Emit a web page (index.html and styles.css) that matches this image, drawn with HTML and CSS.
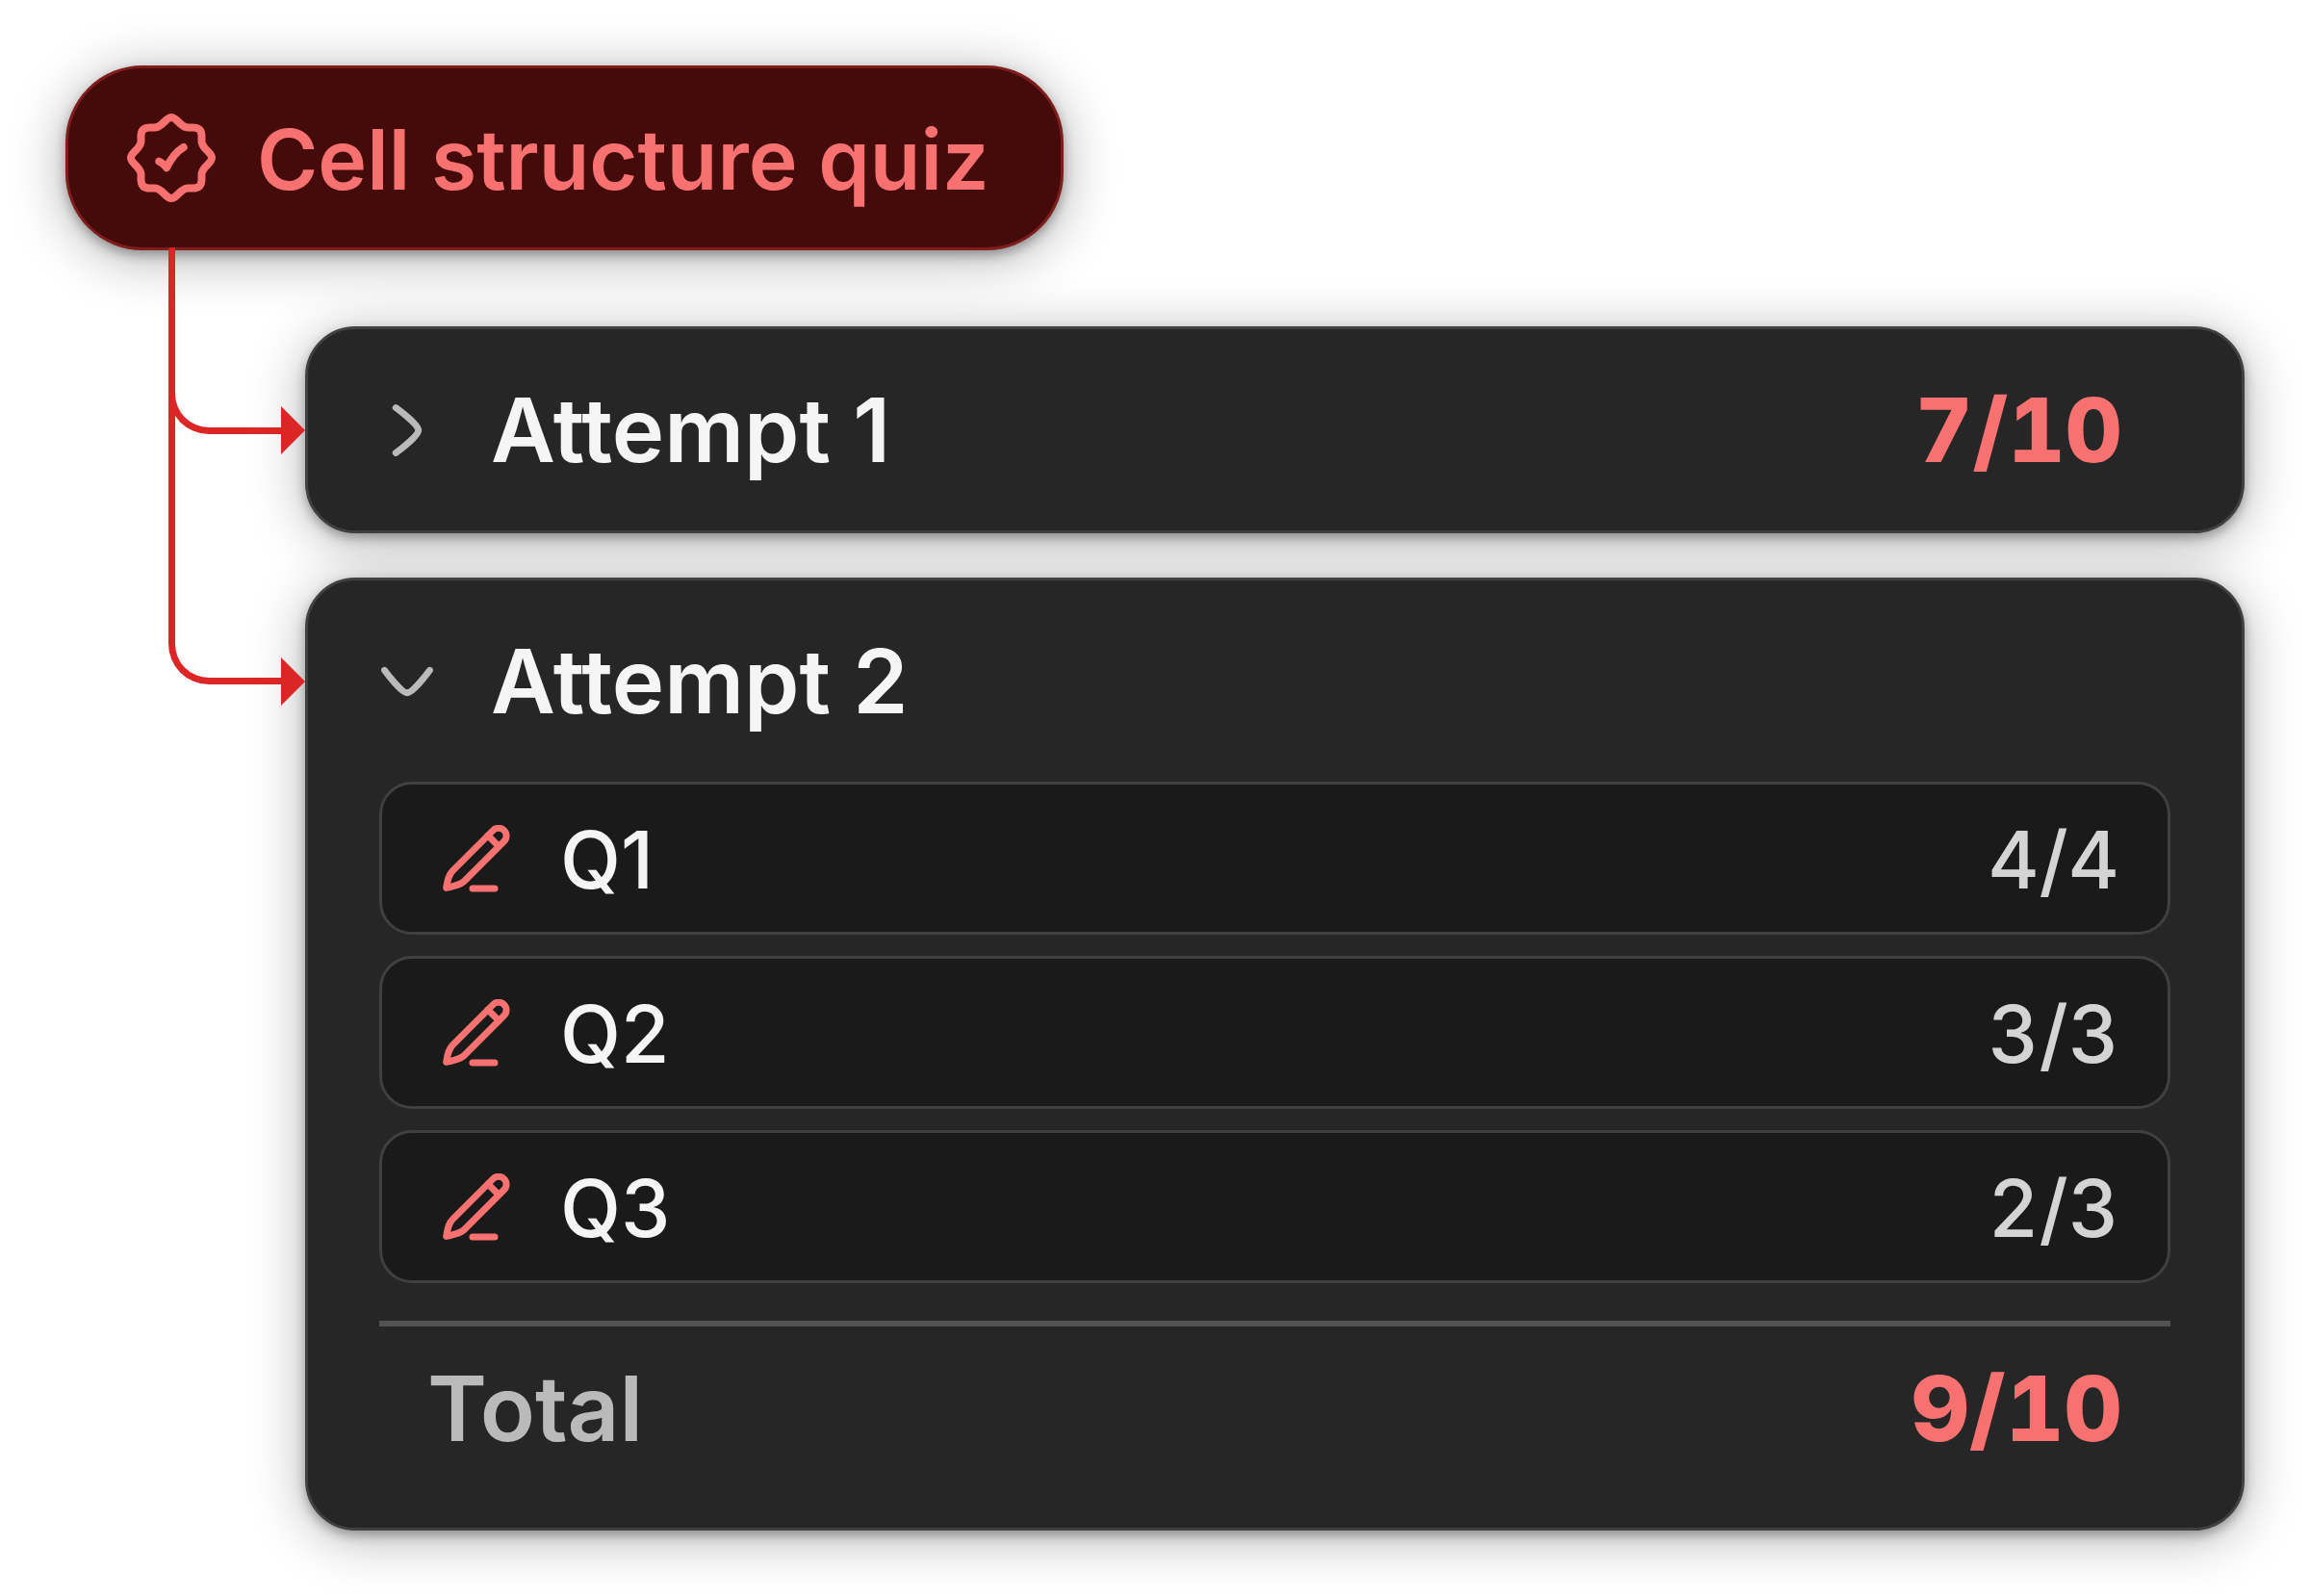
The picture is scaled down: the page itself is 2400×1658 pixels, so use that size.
FILE: index.html
```html
<!DOCTYPE html>
<html lang="en">

<head>
    <meta charset="UTF-8">
    <meta name="viewport" content="width=device-width, initial-scale=1.0">
    <title>Cell structure quiz</title>
    <link rel="stylesheet" href="styles.css">
</head>

<body>
    <!-- Shared pencil icon -->
    <svg class="sprite" aria-hidden="true">
        <symbol id="pencil" viewBox="0 0 70 70">
            <path d="M52.3 5.6A8 8 0 0 1 63.7 17L22 58.7C18 62 14 63 3.7 65.4C5 57 6 52 10.3 47.6Z" />
            <path d="M47 11L58 22" />
            <path d="M31 66H54" />
        </symbol>
    </svg>

    <main class="quiz_page">
        <h1 class="quiz_title">
            <svg class="badge_icon" viewBox="-47 -47 94 94" aria-hidden="true">
                <path d="M0 -42C6 -42 9 -32 17 -31.5C22 -31.2 26 -32.6 29.3 -29.3C32.6 -26 31.2 -22 31.5 -17C32 -9 42 -6 42 0C42 6 32 9 31.5 17C31.2 22 32.6 26 29.3 29.3C26 32.6 22 31.2 17 31.5C9 32 6 42 0 42C-6 42 -9 32 -17 31.5C-22 31.2 -26 32.6 -29.3 29.3C-32.6 26 -31.2 22 -31.5 17C-32 9 -42 6 -42 0C-42 -6 -32 -9 -31.5 -17C-31.2 -22 -32.6 -26 -29.3 -29.3C-26 -32.6 -22 -31.2 -17 -31.5C-9 -32 -6 -42 0 -42Z" />
                <path d="M-12.7 3.7C-9 5 -7 7.5 -5 10.3C-1 2 6 -7 12.7 -11" />
            </svg>
            <span class="title_text">Cell structure quiz</span>
        </h1>

        <ul class="attempt_list">
            <li class="attempt">
                <div class="attempt_header">
                    <button class="attempt_toggle" type="button" aria-expanded="false">
                        <svg class="chevron" viewBox="0 0 24 24" aria-hidden="true">
                            <path d="M9 6s6 4.419 6 6-6 6-6 6" />
                        </svg>
                        Attempt 1
                    </button>
                    <span class="score">7/10</span>
                </div>
            </li>
            <li class="attempt">
                <div class="attempt_header">
                    <button class="attempt_toggle" type="button" aria-expanded="true">
                        <svg class="chevron" viewBox="0 0 24 24" aria-hidden="true">
                            <path d="M18 9s-4.419 6-6 6-6-6-6-6" />
                        </svg>
                        Attempt 2
                    </button>
                </div>
                <ul class="question_list">
                    <li class="question">
                        <svg class="pencil_icon" aria-hidden="true"><use href="#pencil" /></svg>
                        <span class="question_name">Q1</span>
                        <span class="question_score">4/4</span>
                    </li>
                    <li class="question">
                        <svg class="pencil_icon" aria-hidden="true"><use href="#pencil" /></svg>
                        <span class="question_name">Q2</span>
                        <span class="question_score">3/3</span>
                    </li>
                    <li class="question">
                        <svg class="pencil_icon" aria-hidden="true"><use href="#pencil" /></svg>
                        <span class="question_name">Q3</span>
                        <span class="question_score">2/3</span>
                    </li>
                </ul>
                <div class="total_row">
                    <span>Total</span>
                    <span class="score">9/10</span>
                </div>
            </li>
        </ul>
    </main>
</body>

</html>
```

FILE: styles.css
```css
*,
*::before,
*::after {
    box-sizing: border-box;
}

body {
    font-family: Inter, sans-serif;
    background-color: #fff;
    margin: 0;
}

ul {
    list-style: none;
    margin: 0;
    padding: 0;
}

svg {
    flex: none;
    fill: none;
    stroke: currentColor;
    stroke-linecap: round;
    stroke-linejoin: round;
}

.sprite {
    display: none;
}

.quiz_page {
    padding: 68px;
}

.quiz_title {
    display: flex;
    align-items: center;
    gap: 42px;
    width: fit-content;
    height: 192px;
    margin: 0;
    padding: 0 74px 0 60px;
    background-color: #450a0a;
    border: 3px solid #7f1d1d;
    border-radius: 80px;
    box-shadow: 0 5px 12px rgba(0, 0, 0, 0.3), 0 8px 56px rgba(0, 0, 0, 0.32);
    color: #f87171;
    font-size: 86px;
    font-weight: 600;
}

.badge_icon {
    width: 94px;
    height: 94px;
    stroke-width: 8;
}

.title_text {
    padding-top: 3px;
}

.attempt_list {
    display: flex;
    flex-direction: column;
    gap: 46px;
    margin: 79px 0 0 249px;
}

.attempt {
    position: relative;
    background-color: #262626;
    border: 3px solid #404040;
    border-radius: 52px;
    box-shadow: 0 5px 12px rgba(0, 0, 0, 0.3), 0 8px 56px rgba(0, 0, 0, 0.3);
}

/* Red connector from the quiz title to each attempt */
.attempt::before {
    content: "";
    position: absolute;
    left: -145px;
    top: -193px;
    width: 120px;
    height: 301px;
    border-left: 7px solid #dc2626;
    border-bottom: 7px solid #dc2626;
    border-bottom-left-radius: 42px;
}

.attempt:first-child::before {
    top: -85px;
    height: 194px;
    border-top-left-radius: 4px;
}

.attempt::after {
    content: "";
    position: absolute;
    left: -28px;
    top: 80px;
    width: 25px;
    height: 50px;
    background-color: #dc2626;
    clip-path: polygon(0 0, 100% 50%, 0 100%);
}

.attempt_header {
    display: flex;
    align-items: center;
    justify-content: space-between;
    height: 209px;
    padding: 0 124px 0 56px;
}

.attempt_toggle {
    display: flex;
    align-items: center;
    gap: 40px;
    padding: 0;
    background: none;
    border: none;
    color: #f5f5f5;
    font-family: inherit;
    font-size: 92px;
    font-weight: 600;
    cursor: pointer;
}

.chevron {
    width: 94px;
    height: 94px;
    color: #bababa;
    stroke-width: 1.75;
}

.score {
    color: #f87171;
    font-size: 92px;
    font-weight: 800;
    font-variant-numeric: tabular-nums;
}

.question_list {
    display: flex;
    flex-direction: column;
    gap: 22px;
    padding: 0 74px;
}

.question {
    display: flex;
    align-items: center;
    height: 159px;
    padding: 0 50px 0 63px;
    background-color: #1a1a1a;
    border: 3px solid #404040;
    border-radius: 34px;
    color: #f5f5f5;
    font-size: 82px;
    font-weight: 500;
}

.pencil_icon {
    width: 70px;
    height: 70px;
    color: #f87171;
    stroke-width: 7;
}

.question_name,
.question_score {
    padding-top: 3px;
}

.question_name {
    flex: 1;
    margin-left: 52px;
}

.question_score {
    color: #d4d4d4;
    font-variant-numeric: tabular-nums;
}

.total_row {
    display: flex;
    align-items: center;
    justify-content: space-between;
    height: 176px;
    margin: 39px 74px;
    padding: 0 50px;
    border-top: 6px solid #525252;
    color: #bababa;
    font-size: 94px;
    font-weight: 600;
}

.total_row .score {
    font-size: 94px;
}
```
